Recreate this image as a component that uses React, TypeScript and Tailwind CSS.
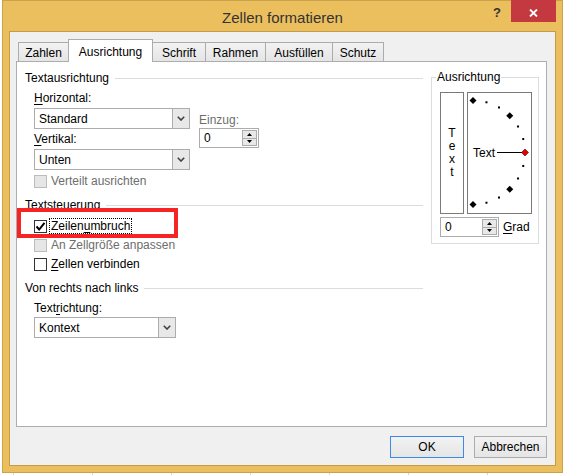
import React from "react";

const U = ({ children }: { children: React.ReactNode }) => (
  <span className="underline underline-offset-[2px] decoration-[1px]">{children}</span>
);

function Check({ checked, disabled }: { checked?: boolean; disabled?: boolean }) {
  return (
    <div
      className={
        "w-[13px] h-[13px] shrink-0 border flex items-center justify-center " +
        (disabled ? "border-[#bcbcbc] bg-[#e6e6e6]" : "border-[#333333] bg-white")
      }
    >
      {checked && (
        <svg width="11" height="11" viewBox="0 0 11 11">
          <path d="M1.5 5.5 L4.2 8.5 L9.5 1.8" stroke="#000" strokeWidth="2" fill="none" />
        </svg>
      )}
    </div>
  );
}

function Select({ value, w }: { value: string; w: string }) {
  return (
    <div className={"flex h-[21px] border border-[#acacac] bg-white " + w}>
      <div className="flex-1 pl-[4px] flex items-center">{value}</div>
      <div className="w-[17px] border-l border-[#acacac] bg-[#e8e8e8] flex items-center justify-center">
        <svg width="8" height="5" viewBox="0 0 8 5">
          <path d="M0.8 0.8 L4 4 L7.2 0.8" stroke="#404040" strokeWidth="1.6" fill="none" />
        </svg>
      </div>
    </div>
  );
}

function Spinner({ w }: { w: string }) {
  return (
    <div className={"flex h-[20px] border border-[#acacac] bg-white " + w}>
      <div className="flex-1 pl-[4px] flex items-center">0</div>
      <div className="w-[15px] my-[1px] mr-[1px] flex flex-col">
        <div className="flex-1 border border-[#acacac] bg-[#e8e8e8] flex items-center justify-center">
          <svg width="5" height="3" viewBox="0 0 5 3">
            <path d="M0 3 L2.5 0 L5 3 Z" fill="#000" />
          </svg>
        </div>
        <div className="flex-1 border border-t-0 border-[#acacac] bg-[#e8e8e8] flex items-center justify-center">
          <svg width="5" height="3" viewBox="0 0 5 3">
            <path d="M0 0 L2.5 3 L5 0 Z" fill="#000" />
          </svg>
        </div>
      </div>
    </div>
  );
}

function GroupHead({ title }: { title: string }) {
  return (
    <div className="flex items-center h-[16px]">
      <span>{title}</span>
      <div className="flex-1 h-px bg-[#dcdcdc] ml-[6px]" />
    </div>
  );
}

function Tab({ label, w, selected, first }: { label: string; w: string; selected?: boolean; first?: boolean }) {
  if (selected) {
    return (
      <div
        className={
          "h-[23px] mb-[-1px] -ml-px relative z-10 border border-b-0 border-[#acacac] bg-white flex items-center justify-center pt-[2px] " +
          w
        }
      >
        {label}
      </div>
    );
  }
  return (
    <div
      className={
        "h-[19px] border border-b-0 border-[#acacac] bg-linear-to-b from-[#f2f2f2] to-[#e5e5e5] flex items-center justify-center pt-[1px] " +
        (first ? "ml-[2px] " : "-ml-px ") +
        w
      }
    >
      {label}
    </div>
  );
}

function Orientation() {
  const cx = 5;
  const cy = 59.5;
  const r = 52;
  const items: React.ReactNode[] = [];
  for (let a = 90; a >= -90; a -= 15) {
    const rad = (a * Math.PI) / 180;
    const x = cx + r * Math.cos(rad);
    const y = cy - r * Math.sin(rad);
    if (a % 45 === 0 || a === 0) {
      const h = 3.5;
      items.push(
        <polygon
          key={a}
          points={`${x},${y - h} ${x + h},${y} ${x},${y + h} ${x - h},${y}`}
          fill={a === 0 ? "#e00000" : "#000"}
          stroke={a === 0 ? "#600000" : "none"}
          strokeWidth={a === 0 ? 0.6 : 0}
        />
      );
    } else {
      items.push(<rect key={a} x={x - 1} y={y - 1} width="2" height="2" fill="#000" />);
    }
  }
  return (
    <svg width="63" height="120" viewBox="0 0 63 120">
      <line x1="29" y1="59.5" x2="54" y2="59.5" stroke="#000" strokeWidth="1" />
      <text x="5" y="64" fontSize="12" fontFamily="'Liberation Sans', Arial, sans-serif" fill="#000">
        Text
      </text>
      {items}
    </svg>
  );
}

export default function App() {
  return (
    <div className="relative w-[566px] h-[475px] bg-white overflow-hidden font-['Liberation_Sans',Arial,sans-serif] text-[12px] leading-[16px] text-black">
      <div className="ml-[2px] w-[561px] h-[473px] border border-[#c9a24c] bg-[#ecbf5e] flex flex-col px-[6px] pb-[6px]">
        <div className="h-[30px] shrink-0 flex items-center justify-center pt-[3px] text-[15px] text-[#333333]">
          Zellen formatieren
        </div>
        <div className="flex-1 border border-[#c29c48] bg-[#f0f0f0] flex flex-col pt-[6px] pl-[6px] pr-[8px] pb-[7px]">
          {/* Tabs */}
          <div className="flex items-end h-[23px] relative z-10">
            <Tab label="Zahlen" w="w-[51px]" first />
            <Tab label="Ausrichtung" w="w-[85px]" selected />
            <Tab label="Schrift" w="w-[54px]" />
            <Tab label="Rahmen" w="w-[61px]" />
            <Tab label="Ausfüllen" w="w-[68px]" />
            <Tab label="Schutz" w="w-[52px]" />
          </div>
          {/* Panel */}
          <div className="h-[366px] border border-[#adadad] bg-white relative flex pt-[7px] pl-[8px]">
            <div className="w-[398px] mt-[1px] flex flex-col">
              <GroupHead title="Textausrichtung" />
              <div className="flex pl-[9px] mt-[4px]">
                <div className="w-[156px] flex flex-col">
                  <div className="h-[16px]">
                    <U>H</U>orizontal:
                  </div>
                  <div className="mt-[2px]">
                    <Select value="Standard" w="w-[156px]" />
                  </div>
                  <div className="h-[16px] mt-[2px]">
                    <U>V</U>ertikal:
                  </div>
                  <div className="mt-[2px]">
                    <Select value="Unten" w="w-[156px]" />
                  </div>
                  <div className="h-[16px] mt-[3px] flex items-center gap-[4px]">
                    <Check disabled />
                    <span className="text-[#6d6d6d]">Verteilt ausrichten</span>
                  </div>
                </div>
                <div className="ml-[9px] pt-[22px] flex flex-col">
                  <div className="h-[16px] text-[#6d6d6d]">Einzug:</div>
                  <Spinner w="w-[60px]" />
                </div>
              </div>
              <div className="mt-[8px]">
                <GroupHead title="Textsteuerung" />
              </div>
              <div className="pl-[9px] flex flex-col">
                <div className="h-[16px] mt-[5px] flex items-center gap-[2px]">
                  <Check checked />
                  <span className="border border-dotted border-black leading-[14px] px-[1px]">
                    Zeilen<U>u</U>mbruch
                  </span>
                </div>
                <div className="h-[16px] mt-[3px] flex items-center gap-[4px]">
                  <Check disabled />
                  <span className="text-[#6d6d6d]">An Zellgröße anpassen</span>
                </div>
                <div className="h-[16px] mt-[3px] flex items-center gap-[4px]">
                  <Check />
                  <span>
                    <U>Z</U>ellen verbinden
                  </span>
                </div>
              </div>
              <div className="mt-[8px]">
                <GroupHead title="Von rechts nach links" />
              </div>
              <div className="pl-[9px] flex flex-col">
                <div className="h-[16px] mt-[4px]">
                  Text<U>r</U>ichtung:
                </div>
                <div className="mt-[1px]">
                  <Select value="Kontext" w="w-[142px]" />
                </div>
              </div>
            </div>
            {/* Right group */}
            <fieldset className="ml-[8px] w-[108px] h-[175px] border border-[#dcdcdc]">
              <legend className="ml-[4px] px-[1px] leading-[16px]">Ausrichtung</legend>
              <div className="flex flex-col pl-[8px] pr-[6px]">
                <div className="flex gap-[3px] mt-[7px] h-[122px]">
                  <div className="w-[24px] border border-[#7a7a7a] flex flex-col items-center justify-center leading-[13px]">
                    <span>T</span>
                    <span>e</span>
                    <span>x</span>
                    <span>t</span>
                  </div>
                  <div className="w-[65px] border border-[#7a7a7a]">
                    <Orientation />
                  </div>
                </div>
                <div className="flex items-center mt-[3px] gap-[4px]">
                  <Spinner w="w-[59px]" />
                  <span>
                    <U>G</U>rad
                  </span>
                </div>
              </div>
            </fieldset>
            {/* red annotation box */}
            <div className="absolute left-[0px] top-[146px] w-[161px] h-[30px] border-[4px] border-[#f72424]" />
          </div>
          {/* Buttons */}
          <div className="flex justify-end gap-[10px] mt-[9px] h-[22px]">
            <div className="w-[74px] border border-[#3c8ae6] bg-linear-to-b from-[#f2f2f2] to-[#e5e5e5] flex items-center justify-center">
              OK
            </div>
            <div className="w-[73px] border border-[#acacac] bg-linear-to-b from-[#f2f2f2] to-[#e5e5e5] flex items-center justify-center">
              Abbrechen
            </div>
          </div>
        </div>
      </div>
      {/* Excel grid behind the dialog */}
      <div className="flex h-[2px]">
        <div className="w-[13px]" />
        <div className="w-[80px] border-l border-[#d4d4d4]" />
        <div className="w-[80px] border-l border-[#d4d4d4]" />
        <div className="w-[80px] border-l border-[#d4d4d4]" />
        <div className="w-[80px] border-l border-[#d4d4d4]" />
        <div className="w-[80px] border-l border-[#d4d4d4]" />
        <div className="w-[80px] border-l border-[#d4d4d4]" />
        <div className="w-[80px] border-l border-[#d4d4d4]" />
      </div>
      {/* Title bar controls */}
      <div className="absolute left-[493px] top-[5px] text-[13px] font-bold text-[#333333]">?</div>
      <div className="absolute left-[511px] top-0 w-[45px] h-[22px] bg-[#c4393f] flex items-center justify-center pt-[3px]">
        <svg width="9" height="8" viewBox="0 0 9 8">
          <path d="M1 0.5 L8 7.5 M8 0.5 L1 7.5" stroke="#fff" strokeWidth="1.8" />
        </svg>
      </div>
    </div>
  );
}
